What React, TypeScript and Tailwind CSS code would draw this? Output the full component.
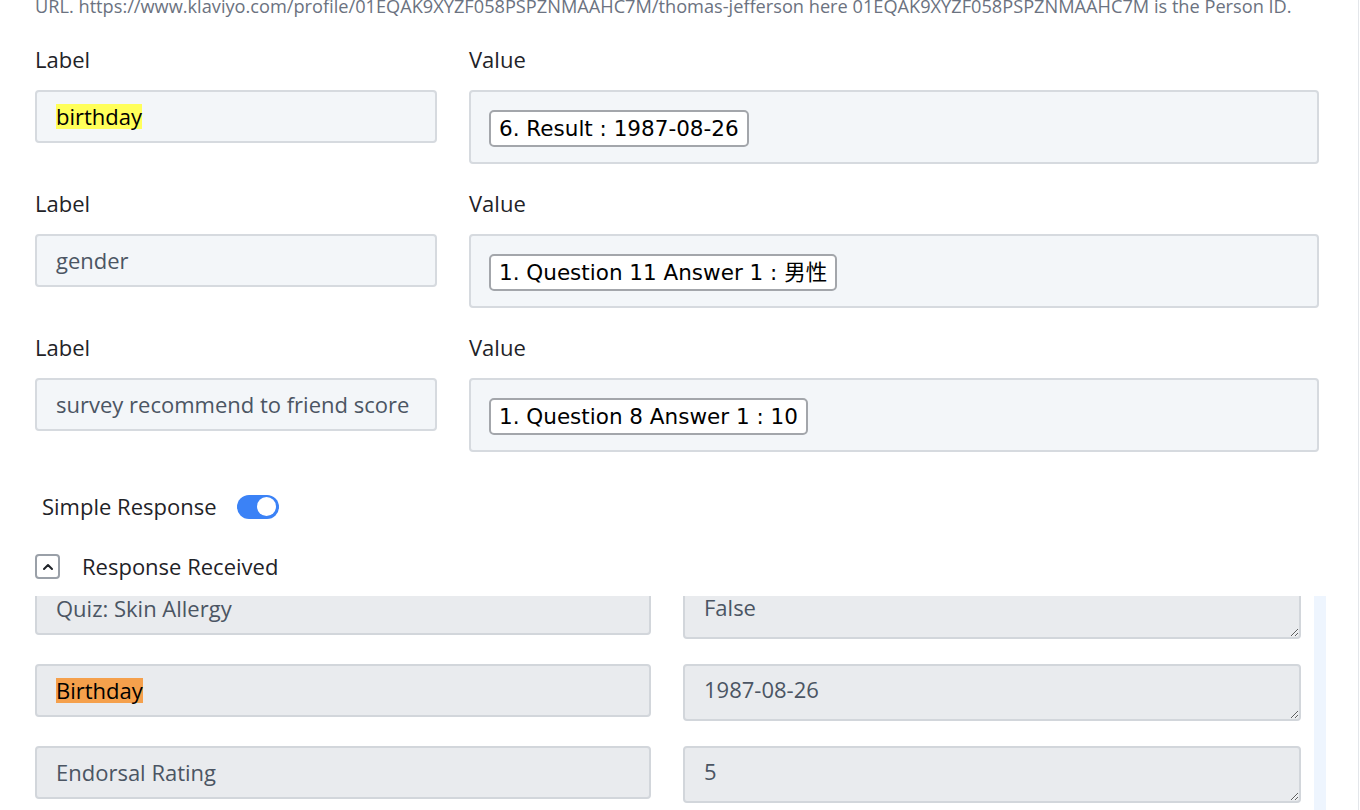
import { ChevronUp } from "lucide-react";

const mapped = [
  { label: "birthday", value: "6. Result : 1987-08-26", mark: true },
  { label: "gender", value: "1. Question 11 Answer 1 : 男性" },
  { label: "survey recommend to friend score", value: "1. Question 8 Answer 1 : 10" },
];

const received = [
  { label: "Quiz: Skin Allergy", value: "False" },
  { label: "Birthday", value: "1987-08-26", mark: true },
  { label: "Endorsal Rating", value: "5" },
];

export default function App() {
  return (
    <div
      className="w-[1359px] h-[810px] overflow-hidden bg-white border-r border-[#e3e6ea] pl-[35px]"
      style={{ fontFamily: "'Open Sans', 'Noto Sans', sans-serif" }}
    >
      <p className="-mt-[6px] text-[18.2px] leading-[24px] text-[#6b7280] whitespace-nowrap">
        URL. https://www.klaviyo.com/profile/01EQAK9XYZF058PSPZNMAAHC7M/thomas-jefferson here
        01EQAK9XYZF058PSPZNMAAHC7M is the Person ID.
      </p>

      {/* label → value mapping */}
      <div className="mt-[26px] flex flex-col gap-[24px] w-[1284px]">
        {mapped.map((row) => (
          <div key={row.label} className="grid grid-cols-[402px_850px] gap-x-[32px]">
            <div className="flex flex-col gap-[16px]">
              <span className="h-[30px] leading-[30px] text-[22px] text-[#1f2328]">Label</span>
              <div className="h-[53px] flex items-center px-[19px] rounded-[4px] border-2 border-[#d6dadf] bg-[#f3f6f9] text-[22px] text-[#4b5563]">
                {row.mark ? (
                  <mark className="bg-[#ffff5a] text-black leading-[25px]">{row.label}</mark>
                ) : (
                  row.label
                )}
              </div>
            </div>
            <div className="flex flex-col gap-[16px]">
              <span className="h-[30px] leading-[30px] text-[22px] text-[#1f2328]">Value</span>
              <div className="h-[74px] pt-[18px] pl-[18px] rounded-[4px] border-2 border-[#d6dadf] bg-[#f3f6f9]">
                <span
                  className="inline-block h-[37px] leading-[33px] px-[8px] rounded-[5px] border-2 border-[#a3a6ab] bg-white text-[21.5px] text-black whitespace-pre"
                  style={{ fontFamily: "'DejaVu Sans', 'Noto Sans CJK JP', sans-serif" }}
                >
                  {row.value}
                </span>
              </div>
            </div>
          </div>
        ))}
      </div>

      {/* simple response switch */}
      <div className="mt-[38px] ml-[7px] flex items-center gap-[20px]">
        <span className="text-[22px] text-[#1f2328]">Simple Response</span>
        <button className="w-[42px] h-[24px] rounded-full bg-[#3b82f6] flex items-center justify-end pr-[3px]">
          <span className="w-[19px] h-[19px] rounded-full bg-white" />
        </button>
      </div>

      <div className="mt-[27px] flex items-center gap-[22px]">
        <span className="w-[25px] h-[25px] rounded-[4px] border-2 border-[#9aa0a8] flex items-center justify-center">
          <ChevronUp size={16} strokeWidth={3} className="text-[#1f2328]" />
        </span>
        <span className="text-[22px] text-[#1f2328]">Response Received</span>
      </div>

      {/* received responses, scrolled a little */}
      <div className="mt-[13px] w-[1291px] h-[220px] overflow-hidden flex">
        <div className="flex-1 -mt-[14px] flex flex-col gap-[25px] pr-[13px]">
          {received.map((row) => (
            <div key={row.label} className="grid grid-cols-[616px_618px] gap-x-[32px] items-start">
              <div className="h-[53px] flex items-center px-[19px] rounded-[4px] border-2 border-[#d2d6db] bg-[#e9ebee] text-[22px] text-[#4b5563]">
                {row.mark ? (
                  <mark className="bg-[#f5a04c] text-black leading-[25px]">{row.label}</mark>
                ) : (
                  row.label
                )}
              </div>
              <textarea
                readOnly
                defaultValue={row.value}
                className="h-[57px] px-[19px] py-[8px] rounded-[4px] border-2 border-[#d2d6db] bg-[#e9ebee] text-[22px] leading-[30px] text-[#4b5563] outline-none"
              />
            </div>
          ))}
        </div>
        <div className="w-[12px] h-full bg-[#eef5fe]" />
      </div>
    </div>
  );
}
